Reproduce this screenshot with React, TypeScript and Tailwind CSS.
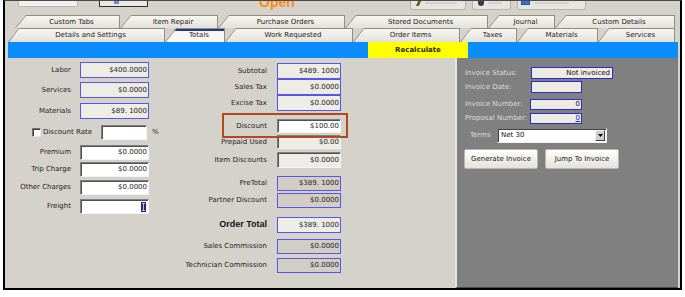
import React from 'react'

const ROW1 = [
  { label: 'Custom Tabs', w: 'w-[105px]' },
  { label: 'Item Repair', w: 'w-[98px]' },
  { label: 'Purchase Orders', w: 'w-[127px]' },
  { label: 'Stored Documents', w: 'w-[143px]' },
  { label: 'Journal', w: 'w-[67px]' },
  { label: 'Custom Details', w: 'w-[120px]' },
]

const ROW2 = [
  { label: 'Details and Settings', w: 'w-[157px]' },
  { label: 'Totals', w: 'w-[60px]', active: true },
  { label: 'Work Requested', w: 'w-[128px]' },
  { label: 'Order Items', w: 'w-[107px]' },
  { label: 'Taxes', w: 'w-[57px]' },
  { label: 'Materials', w: 'w-[81px]' },
  { label: 'Services', w: 'w-[77px]' },
]

function Tab({ label, w, active }: { label: string; w: string; active?: boolean }) {
  return (
    <div className={`${w} relative h-full shrink-0 bg-[#8f8d87] [clip-path:polygon(11px_0,100%_0,100%_100%,0_100%)]`}>
      <div
        className={`absolute left-[1px] right-[1px] top-[1px] bottom-0 flex items-center justify-center pl-[8px] [clip-path:polygon(10px_0,100%_0,100%_100%,0_100%)] ${
          active ? 'bg-[#f8f7f3]' : 'bg-linear-to-b from-[#f7f6f1] to-[#e3e1da]'
        }`}
      >
        {active && <div className="absolute left-[4px] right-0 top-0 h-[2px] bg-[#1f3a7e]" />}
        <span className="text-[7px] leading-none text-[#1c1c1c] whitespace-nowrap">{label}</span>
      </div>
    </div>
  )
}

type Kind = 'blue' | 'blueGray' | 'sunken' | 'input'

function Box({ value, kind, cls, children }: { value?: string; kind: Kind; cls: string; children?: React.ReactNode }) {
  const k = {
    blue: 'border border-[#5656ea] bg-[#edece5]',
    blueGray: 'border border-[#5656ea] bg-[#d2cec6]',
    sunken: 'border border-t-[#808080] border-l-[#808080] border-r-[#f4f4f4] border-b-[#f4f4f4] shadow-[inset_1px_1px_0_#505050] bg-[#edece5]',
    input: 'border border-t-[#808080] border-l-[#808080] border-r-[#f4f4f4] border-b-[#f4f4f4] shadow-[inset_1px_1px_0_#505050] bg-white',
  }[kind]
  return (
    <div className={`${cls} ${k} flex items-center justify-end pr-[1px] text-[7px] leading-none text-[#1e1e1e] shrink-0`}>
      {value}
      {children}
    </div>
  )
}

function LeftRow({ label, value, kind, cls }: { label: string; value?: string; kind: Kind; cls: string }) {
  return (
    <div className={`flex items-center ${cls}`}>
      <span className="w-[66px] shrink-0 text-right text-[7px] text-[#1e1e1e] whitespace-nowrap">{label}</span>
      <Box value={value} kind={kind} cls="ml-[9px] w-[69px] h-full" />
    </div>
  )
}

function MidRow({ label, value, kind, cls, bold }: { label: string; value: string; kind: Kind; cls: string; bold?: boolean }) {
  return (
    <div className={`flex items-center ${cls}`}>
      <span
        className={`w-[112px] shrink-0 text-right whitespace-nowrap text-[#1e1e1e] ${
          bold ? "font-['Liberation_Sans',Arial,sans-serif] text-[9px] font-bold text-[#111]" : 'text-[7px]'
        }`}
      >
        {label}
      </span>
      <Box value={value} kind={kind} cls="ml-[10px] w-[64px] h-full" />
    </div>
  )
}

function PanelRow({ label, children, cls }: { label: string; children: React.ReactNode; cls: string }) {
  return (
    <div className={`flex items-center ${cls}`}>
      <span className="w-[66px] shrink-0 text-[7px] text-[#dcdcdc] whitespace-nowrap">{label}</span>
      {children}
    </div>
  )
}

export default function App() {
  return (
    <div className="w-[685px] h-[297px] bg-white overflow-hidden font-['DejaVu_Sans',sans-serif]">
      <div className="mx-[3px] h-[290px] border-t border-t-[#4a4a4a] border-x-2 border-b-2 border-x-black border-b-black bg-[#d5d2cb] flex flex-col">
        {/* top strip, cut off by the window edge */}
        <div className="h-[14px] flex items-start overflow-hidden shrink-0">
          <div className="ml-[13px] w-[60px] h-[6px] rounded-b-[2px] border-x border-b border-[#b9b7b1] bg-[#f1f0ec]" />
          <div className="ml-[21px] w-[49px] h-[6px] border-x border-b border-[#2e2e2e] bg-[#e9e8e2] flex items-start pl-[14px]">
            <div className="w-[5px] h-[3px] bg-[#6a8ad0]" />
          </div>
          <div className="ml-[111px] w-[40px] h-[9px] overflow-hidden">
            <div className="-mt-[6px] font-['Liberation_Sans',Arial,sans-serif] text-[14px] leading-[14px] font-bold text-[#ff8a10]">Open</div>
          </div>
          <div className="ml-[111px] w-[56px] h-[9px] rounded-b-[3px] border-x border-b border-[#b4b2ac] bg-[#e7e5df] flex items-start gap-[5px] pl-[6px]">
            <div className="w-[3px] h-[5px] bg-[#6b5a1e] skew-x-[-25deg]" />
            <div className="mt-[1px] w-[32px] h-[2px] bg-[#d2d0ca]" />
          </div>
          <div className="ml-[6px] w-[39px] h-[9px] rounded-b-[3px] border-x border-b border-[#b4b2ac] bg-[#e7e5df] flex items-start gap-[4px] pl-[5px]">
            <div className="w-[6px] h-[5px] rounded-b-full bg-[#3c3c3c]" />
            <div className="mt-[1px] w-[14px] h-[2px] bg-[#d2d0ca]" />
          </div>
          <div className="ml-[6px] w-[69px] h-[9px] rounded-b-[3px] border-x border-b border-[#b4b2ac] bg-[#e7e5df] flex items-start gap-[5px] pl-[3px]">
            <div className="w-[9px] h-[4px] bg-[#3b6fd6] border-x border-b border-[#2a4f9e]" />
            <div className="mt-[1px] w-[34px] h-[2px] bg-[#d2d0ca]" />
          </div>
        </div>

        {/* tabs */}
        <div className="h-[13px] flex pl-[10px] shrink-0">
          {ROW1.map((t) => (
            <Tab key={t.label} label={t.label} w={t.w} />
          ))}
        </div>
        <div className="h-[14px] flex pl-[3px] shrink-0">
          {ROW2.map((t) => (
            <Tab key={t.label} label={t.label} w={t.w} active={t.active} />
          ))}
        </div>

        {/* blue bar */}
        <div className="h-[16px] ml-[3px] mr-[2px] bg-[#0a8cfc] flex shrink-0">
          <div className="ml-[360px] w-[100px] h-full bg-[#ffff00] flex items-center justify-center text-[7px] font-bold text-[#2a2a10]">
            Recalculate
          </div>
        </div>

        {/* content */}
        <div className="flex flex-1 min-h-0">
          <div className="w-[450px] flex">
            {/* left column */}
            <div className="w-[150px] shrink-0 flex flex-col">
              <LeftRow label="Labor" value="$400.0000" kind="blue" cls="mt-[4px] h-[16px]" />
              <LeftRow label="Services" value="$0.0000" kind="blue" cls="mt-[4px] h-[16px]" />
              <LeftRow label="Materials" value="$89. 1000" kind="blue" cls="mt-[5px] h-[16px]" />
              <div className="mt-[6px] h-[15px] flex items-center pl-[27px] whitespace-nowrap">
                <div className="w-[9px] h-[9px] shrink-0 border border-t-[#707070] border-l-[#707070] border-r-[#e8e8e8] border-b-[#e8e8e8] shadow-[inset_1px_1px_0_#404040] bg-white" />
                <span className="ml-[2px] shrink-0 text-[7px] text-[#1e1e1e]">Discount Rate</span>
                <Box kind="input" cls="ml-[9px] w-[46px] h-full" />
                <span className="ml-[5px] shrink-0 text-[7px] text-[#1e1e1e]">%</span>
              </div>
              <LeftRow label="Premium" value="$0.0000" kind="input" cls="mt-[5px] h-[15px]" />
              <LeftRow label="Trip Charge" value="$0.0000" kind="input" cls="mt-[2px] h-[15px]" />
              <LeftRow label="Other Charges" value="$0.0000" kind="input" cls="mt-[3px] h-[15px]" />
              <div className="mt-[4px] h-[15px] flex items-center">
                <span className="w-[66px] shrink-0 text-right text-[7px] text-[#1e1e1e]">Freight</span>
                <Box kind="input" cls="ml-[9px] w-[69px] h-full">
                  <svg width="5" height="10" viewBox="0 0 5 10" className="mr-[1px]">
                    <rect x="0" y="0" width="5" height="10" fill="#1d2b72" />
                    <path d="M1 1.5h3M1 8.5h3M2.5 1.5v7" stroke="#c9d2f5" strokeWidth="0.9" />
                  </svg>
                </Box>
              </div>
            </div>

            {/* middle column */}
            <div className="relative flex flex-col">
              <MidRow label="Subtotal" value="$489. 1000" kind="blue" cls="mt-[5px] h-[16px]" />
              <MidRow label="Sales Tax" value="$0.0000" kind="blue" cls="h-[16px]" />
              <MidRow label="Excise Tax" value="$0.0000" kind="blue" cls="h-[16px]" />
              <MidRow label="Discount" value="$100.00" kind="input" cls="mt-[8px] h-[14px]" />
              <MidRow label="Prepaid Used" value="$0.00" kind="sunken" cls="mt-[2px] h-[14px]" />
              <MidRow label="Item Discounts" value="$0.0000" kind="sunken" cls="mt-[3px] h-[16px]" />
              <MidRow label="PreTotal" value="$389. 1000" kind="blueGray" cls="mt-[8px] h-[15px]" />
              <MidRow label="Partner Discount" value="$0.0000" kind="blueGray" cls="mt-[2px] h-[15px]" />
              <MidRow label="Order Total" value="$389. 1000" kind="blue" cls="mt-[9px] h-[16px]" bold />
              <MidRow label="Sales Commission" value="$0.0000" kind="blueGray" cls="mt-[6px] h-[15px]" />
              <MidRow label="Technician Commission" value="$0.0000" kind="blueGray" cls="mt-[4px] h-[15px]" />
              <div className="absolute left-[67px] top-[55px] w-[126px] h-[25px] border-2 border-[#b3481f]" />
            </div>
          </div>

          {/* invoice panel */}
          <div className="w-[223px] bg-[#808080] border-l-2 border-l-[#e6e4de] border-b border-b-[#4d4d4d] pt-[9px] pl-[8px] flex flex-col">
            <PanelRow label="Invoice Status:" cls="h-[12px]">
              <div className="w-[82px] h-full border border-[#2a2ad0] bg-[#ecebe4] flex items-center justify-end pr-[2px] text-[7px] text-[#111]">
                Not invoiced
              </div>
            </PanelRow>
            <PanelRow label="Invoice Date:" cls="mt-[2px] h-[12px]">
              <div className="w-[51px] h-full border border-[#2a2ad0] bg-[#ecebe4]" />
            </PanelRow>
            <PanelRow label="Invoice Number:" cls="mt-[6px] h-[11px]">
              <div className="-ml-[1px] w-[52px] h-full border border-[#2a2ad0] bg-[#ecebe4] flex items-center justify-end pr-[1px] text-[7px] text-[#111]">
                0
              </div>
            </PanelRow>
            <PanelRow label="Proposal Number:" cls="mt-[3px] h-[11px]">
              <div className="-ml-[1px] w-[52px] h-full border border-[#2a2ad0] bg-[#ecebe4] flex items-center justify-end pr-[1px] text-[7px] text-[#1c1cc8] underline">
                0
              </div>
            </PanelRow>
            <div className="mt-[4px] h-[15px] flex items-center pl-[5px]">
              <span className="w-[27px] text-[7px] text-[#dcdcdc]">Terms</span>
              <div className="w-[110px] h-full border border-t-[#808080] border-l-[#808080] border-r-[#f4f4f4] border-b-[#f4f4f4] shadow-[inset_1px_1px_0_#404040] bg-white flex items-center pl-[3px]">
                <span className="text-[7px] text-[#111]">Net 30</span>
                <div className="ml-auto mr-[1px] w-[10px] h-[11px] bg-[#d4d0c8] border border-t-[#f4f4f4] border-l-[#f4f4f4] border-r-[#404040] border-b-[#404040] flex items-center justify-center">
                  <svg width="5" height="3" viewBox="0 0 5 3">
                    <path d="M0 0h5L2.5 3z" fill="#000" />
                  </svg>
                </div>
              </div>
            </div>
            <div className="mt-[6px] -ml-[1px] flex gap-[7px]">
              <button className="w-[74px] h-[20px] rounded-[2px] border border-[#b7b5ae] bg-linear-to-b from-white to-[#e4e2dc] text-[7px] text-[#222]">
                Generate Invoice
              </button>
              <button className="w-[74px] h-[20px] rounded-[2px] border border-[#b7b5ae] bg-linear-to-b from-white to-[#e4e2dc] text-[7px] text-[#222]">
                Jump To Invoice
              </button>
            </div>
          </div>
        </div>
      </div>
    </div>
  )
}
